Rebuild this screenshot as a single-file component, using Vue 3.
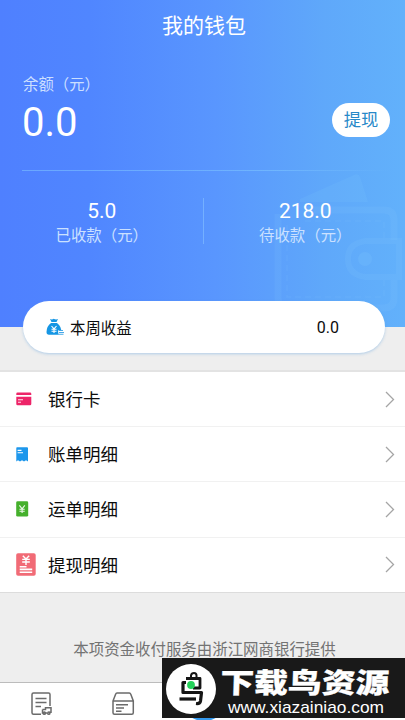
<script setup>
const stats = [
  { value: '5.0', label: '已收款（元）' },
  { value: '218.0', label: '待收款（元）' },
]
const rows = [
  { icon: 'card', label: '银行卡' },
  { icon: 'bill', label: '账单明细' },
  { icon: 'waybill', label: '运单明细' },
  { icon: 'withdraw', label: '提现明细' },
]
</script>

<template>
  <div class="page">
    <section class="hero">
      <svg class="wallet" width="135" height="155" viewBox="270 172 135 155" fill="none">
        <path d="M300 199 L354 175 Q358 173 360 177 L368 202 H300 Z" fill="#7cc8ff" fill-opacity=".16" />
        <g stroke="#8bd0ff" stroke-opacity=".12">
          <path d="M304 210 H384 Q394 210 394 220 V240 M394 280 V298 Q394 308 384 308 H288 Q278 308 278 298 V214" stroke-width="7" />
          <path d="M305 221 H384 V239 M384 280 V297 H287 V225" stroke-width="1.5" stroke-dasharray="6 4" />
          <path d="M399 241 H366 Q348 243 348 259 Q348 275 366 277 H399 Z" stroke-width="6" />
        </g>
        <circle cx="365" cy="259" r="7" fill="#8bd0ff" fill-opacity=".17" />
      </svg>
      <h1 class="title">我的钱包</h1>
      <div class="balance">
        <div>
          <div class="balance-label">余额（元）</div>
          <div class="balance-value">0.0</div>
        </div>
        <button class="withdraw">提现</button>
      </div>
      <div class="stats">
        <div v-for="s in stats" :key="s.label" class="stat">
          <div class="stat-value">{{ s.value }}</div>
          <div class="stat-label">{{ s.label }}</div>
        </div>
      </div>
    </section>

    <section class="week">
      <svg width="19" height="18" viewBox="0 0 19 18">
        <path d="M4 1 Q6 2 7.7 .8 Q10 2 12 1 L10.5 4 H5.5 Z" fill="#1696e4" />
        <path d="M5 5 H11 Q16 9 15 14 Q14.5 16.7 12 16.7 H3 Q.5 16.7 .5 14 Q.7 8 5 5 Z" fill="#1696e4" />
        <path d="M5.5 8 L8 10.8 L10.5 8 M8 10.8 V15 M5.5 11.2 H10.5 M5.5 13.2 H10.5" stroke="#fff" stroke-width="1.1" fill="none" />
        <path d="M12 12 H18.5 V17.5 H12.5 Z" fill="#fff" />
        <path d="M12.5 12.5 H17 M13 14.5 H18 M12 16.3 H17.5" stroke="#48a9e8" stroke-width="1.1" />
      </svg>
      <span class="week-label">本周收益</span>
      <span class="week-value">0.0</span>
    </section>

    <section class="list">
      <div v-for="r in rows" :key="r.icon" class="row">
        <div class="row-icon">
          <svg v-if="r.icon === 'card'" width="16" height="14" viewBox="0 0 16 14">
            <path d="M1.5 .5 H14 Q15.3 .5 15.3 1.8 V3 H.3 V1.8 Q.3 .5 1.5 .5 Z M.3 4.7 H15.3 V12 Q15.3 13.3 14 13.3 H1.6 Q.3 13.3 .3 12 Z" fill="#ed2468" />
            <path d="M2 7.8 H7 M2 10.2 H5" stroke="#fff" stroke-opacity=".85" stroke-width="1.1" />
          </svg>
          <svg v-else-if="r.icon === 'bill'" width="13" height="15" viewBox="0 0 13 15">
            <path d="M1 .3 H11 Q12 .3 12 1.3 V14.4 L10 13.2 L8 14.4 L6 13.2 L4 14.4 L2 13.2 L.3 14.4 V1.3 Q.3 .3 1 .3 Z" fill="#1d97ec" />
            <path d="M1.6 3.4 H5.5 M1.6 5.8 H7" stroke="#fff" stroke-width="1.1" />
          </svg>
          <svg v-else-if="r.icon === 'waybill'" width="13" height="16" viewBox="0 0 13 16">
            <rect x=".2" y=".3" width="12" height="15.3" rx="1.4" fill="#45b02c" />
            <path d="M3.4 4.4 L6.1 7.8 L8.8 4.4 M6.1 7.8 V12 M3.5 8.3 H8.7 M3.5 10.2 H8.7" stroke="#fff" stroke-opacity=".9" stroke-width="1.1" fill="none" />
          </svg>
          <svg v-else width="20" height="23" viewBox="0 0 20 23">
            <rect x=".2" y=".2" width="19.5" height="22.6" rx="1.8" fill="#f16b76" />
            <path d="M6.8 2.8 L10 6 L13.2 2.8 M10 6 V12 M6.2 6.4 H13.8 M6.2 9 H13.8" stroke="#fff" stroke-width="1.4" fill="none" />
            <path d="M3.7 13.8 H10.5 M3.7 16.4 H16.2 M3.7 19.2 H16.2" stroke="#fff" stroke-width="1.6" />
          </svg>
        </div>
        <span class="row-label">{{ r.label }}</span>
        <svg class="arrow" width="10" height="17" viewBox="0 0 10 17">
          <path d="M1 1 L8.5 8.5 L1 16" fill="none" stroke="#a5a5a5" stroke-width="1.3" />
        </svg>
      </div>
    </section>

    <p class="note">本项资金收付服务由浙江网商银行提供</p>

    <nav class="tabs">
      <svg width="22" height="24" viewBox="0 0 22 24" fill="none" stroke="#6b6b6b" stroke-width="1.5">
        <path d="M10 22.2 H2.5 Q1 22.2 1 20.7 V2.5 Q1 1 2.5 1 H17.5 Q19 1 19 2.5 V14" />
        <path d="M4.5 6.5 H15.5 M4.5 10.5 H15.5 M4.5 14.5 H10" />
        <path d="M11.5 17.5 H14.5 V15.8 H20 V20.3 H18.5 M16 21 H11.5 V17.5" />
        <circle cx="13.3" cy="21.2" r="1.1" /><circle cx="17.8" cy="21.2" r="1.1" />
      </svg>
      <svg width="23" height="24" viewBox="0 0 23 24" fill="none" stroke="#6b6b6b" stroke-width="1.5">
        <path d="M1 9 L3.7 2 Q4 1 5 1 H17.3 Q18.4 1 18.7 2 L21.3 9 V20.7 Q21.3 22.2 19.8 22.2 H2.5 Q1 22.2 1 20.7 Z M1 9 H21.3" />
        <path d="M4 12.8 H16 M4 16 H12 M4 19.2 H9.5" />
      </svg>
    </nav>
    <div class="tab-main"></div>

    <svg class="watermark" width="243" height="60" viewBox="0 0 243 60">
      <rect width="243" height="60" fill="#191919" />
      <circle cx="29" cy="31" r="25" fill="#fff" />
      <g fill="none" stroke="#151515" stroke-width="3.2" stroke-linejoin="round">
        <path d="M29 20 V17.5 Q29.5 15 32 15 Q34.5 15 34.5 17.5 V20" stroke-width="2" />
        <path d="M24 20.5 H38 V30 H31" stroke-width="2.8" />
        <path d="M24 24.5 H21 V34.5 H39.5 L38.5 43 Q38 46 34 45.5" />
        <path d="M17.5 41 H34" />
      </g>
      <circle cx="29" cy="27" r="3.9" fill="#25d25a" />
      <text class="mark-name" transform="translate(58 35.3) skewX(-2)" x="0" y="0" textLength="169" lengthAdjust="spacingAndGlyphs">下载鸟资源</text>
      <text class="mark-url" x="66" y="54.5" textLength="156" lengthAdjust="spacingAndGlyphs">www.xiazainiao.com</text>
    </svg>
  </div>
</template>

<style>
body {
  margin: 0;
  overflow: hidden;
}
</style>

<style scoped>
.page {
  position: relative;
  display: flex;
  flex-direction: column;
  width: 405px;
  height: 720px;
  overflow: hidden;
  background: #eee;
  color: #0c0c0c;
  font-family: Roboto, "Noto Sans CJK SC", sans-serif;
}
.hero {
  position: relative;
  box-sizing: border-box;
  flex: none;
  height: 327px;
  padding: 11px 20px 0 22px;
  background: linear-gradient(90deg, #4f80ff 0%, #5086ff 22%, #5996fe 53%, #5fa8fa 80%, #62b1fb 100%);
  color: #fff;
}
.wallet {
  position: absolute;
  right: 0;
  bottom: 0;
}
.title {
  margin: 0 0 0 1px;
  font-size: 21px;
  font-weight: 400;
  line-height: 30px;
  text-align: center;
}
.balance {
  position: relative;
  display: flex;
  justify-content: space-between;
  align-items: flex-end;
  height: 130px;
  margin-right: -5px;
  box-sizing: border-box;
  padding-bottom: 24px;
}
.balance::after {
  content: "";
  position: absolute;
  left: 0;
  right: 0;
  bottom: 0;
  height: 1px;
  background: linear-gradient(90deg, rgba(115, 180, 255, .75) 0%, rgba(125, 196, 255, .6) 70%, rgba(125, 196, 255, 0) 100%);
}
.balance-label {
  padding-left: 1px;
  font-size: 15.4px;
  line-height: 22px;
  color: #cbdfff;
}
.balance-value {
  margin-top: 3px;
  font-size: 40px;
  line-height: 48px;
}
.withdraw {
  width: 58px;
  height: 34px;
  margin-bottom: 10px;
  padding: 0;
  border: 0;
  border-radius: 17px;
  background: #fff;
  color: #2789c8;
  font: 17.3px/34px Roboto, "Noto Sans CJK SC", sans-serif;
}
.stats {
  position: relative;
  display: flex;
  margin: 27px -21px 0 -22px;
  height: 46px;
}
.stat {
  flex: 1;
  text-align: center;
}
.stat + .stat {
  border-left: 1px solid rgba(135, 195, 255, .6);
}
.stat-value {
  padding: 1px 0 0 1px;
  font-size: 21px;
  line-height: 25px;
}
.stat-label {
  padding: 1px 0 0 1px;
  font-size: 15.4px;
  line-height: 23px;
  color: #cbe1ff;
}
.week {
  position: relative;
  box-sizing: border-box;
  flex: none;
  display: flex;
  align-items: center;
  height: 52px;
  margin: -26px 20px 0 23px;
  padding: 0 46px 0 23px;
  border-radius: 26px;
  background: #fff;
  box-shadow: 0 1px 3px rgba(100, 165, 225, .45);
}
.week-label {
  margin-left: 5px;
  font-size: 15.4px;
}
.week-value {
  margin-left: auto;
  font-size: 16px;
}
.list {
  flex: none;
  margin-top: 17px;
  border-top: 2px solid #e3e3e3;
  border-bottom: 1px solid #dcdcdc;
  background: #fff;
}
.row {
  box-sizing: border-box;
  display: flex;
  align-items: center;
  height: 55.2px;
  padding: 0 10px 0 16px;
  border-bottom: 1px solid #f1f1f1;
}
.row:last-child {
  border-bottom: 0;
  height: 54.4px;
}
.row-icon {
  display: flex;
  align-items: center;
  width: 32px;
}
.row-label {
  padding-top: 2px;
  font-size: 17.5px;
  line-height: 26px;
}
.arrow {
  margin-left: auto;
}
.note {
  margin: 45px 0 0 4px;
  font-size: 15.45px;
  line-height: 24px;
  text-align: center;
  color: #737373;
}
.tabs {
  box-sizing: border-box;
  display: flex;
  gap: 59px;
  height: 38px;
  margin-top: auto;
  padding: 9px 0 0 31px;
  border-top: 1px solid #bcbcbc;
  background: #fff;
}
.tab-main {
  position: absolute;
  left: 179px;
  top: 671px;
  width: 50px;
  height: 50px;
  border-radius: 50%;
  background: #3499ee;
}
.watermark {
  position: absolute;
  left: 162px;
  top: 658px;
}
.mark-name {
  font: 900 28px "Noto Sans CJK SC", sans-serif;
  fill: #fff;
  stroke: #fff;
  stroke-width: .3px;
}
.mark-url {
  font: 17px "Liberation Sans", sans-serif;
  fill: #fff;
}
</style>
